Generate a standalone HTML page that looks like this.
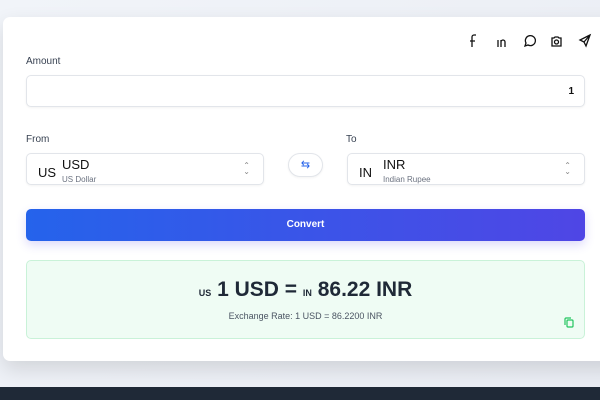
<!DOCTYPE html>
<html><head><style>
*{box-sizing:border-box;margin:0;padding:0}
body{width:600px;height:400px;overflow:hidden;background:linear-gradient(135deg,#f1f4f9,#e9ecf3);font-family:"Liberation Sans",sans-serif;position:relative}
.card{position:absolute;left:3px;top:17px;width:620px;height:344px;background:#fff;border-radius:7px;box-shadow:0 8px 20px rgba(0,0,0,.12)}
.foot{position:absolute;left:0;top:387px;width:600px;height:13px;background:#1f2937}
.lbl{position:absolute;font-size:10px;color:#374151}
.box{position:absolute;border:1px solid #e2e5ea;border-radius:5px;background:#fff;box-shadow:0 1px 2px rgba(0,0,0,.05)}
.icons{position:absolute;top:35px;font-size:11px;color:#111}
.sel .code{position:absolute;left:11px;top:11px;font-size:13px;color:#111}
.sel .cur{position:absolute;left:35px;top:3px;font-size:13px;color:#111}
.sel .nm{position:absolute;left:35px;top:21px;font-size:8px;color:#6b7280}
.sel .ar{position:absolute;right:13px;top:9px;font-size:8px;color:#888;line-height:6px}
</style></head><body>
<div class="card"></div>
<svg style="position:absolute;left:466px;top:33px" width="130" height="16" fill="none" stroke="#111" stroke-width="1.3">
<path d="M10 2h-2a2 2 0 0 0-2 2v10M4 8h5"/>
<path d="M32 4v0M32 7v7M35 14v-7M35 9a2 2 0 0 1 4 0v5"/>
<path d="M59 13l1-3a5 5 0 1 1 2 2z"/>
<path d="M86 5h2l1-1h3l1 1h2v8h-9z"/><circle cx="90.5" cy="9" r="2"/>
<path d="M124 2l-10 5 4 2 2 4z M118 9l6-7"/>
</svg>
<div class="lbl" style="left:26px;top:56px">Amount</div>
<div class="box" style="left:26px;top:75px;width:559px;height:32px"><span style="position:absolute;right:10px;top:10px;font-size:10px;font-weight:bold;color:#111">1</span></div>
<div class="lbl" style="left:26px;top:134px">From</div>
<div class="lbl" style="left:346px;top:134px">To</div>
<div class="box sel" style="left:26px;top:153px;width:238px;height:32px"><span class="code">US</span><span class="cur">USD</span><span class="nm">US Dollar</span><span class="ar">⌃<br>⌄</span></div>
<div class="box" style="left:288px;top:153px;width:35px;height:24px;border-radius:12px;text-align:center;color:#2563eb;font-size:11px;line-height:22px">⇆</div>
<div class="box sel" style="left:347px;top:153px;width:238px;height:32px"><span class="code">IN</span><span class="cur">INR</span><span class="nm">Indian Rupee</span><span class="ar">⌃<br>⌄</span></div>
<div style="position:absolute;left:26px;top:209px;width:559px;height:32px;border-radius:5px;background:linear-gradient(90deg,#2563eb,#4f46e5);color:#fff;font-size:10px;font-weight:bold;text-align:center;line-height:32px;box-shadow:0 4px 10px rgba(79,70,229,.2)">Convert</div>
<div style="position:absolute;left:26px;top:260px;width:559px;height:79px;border-radius:5px;background:#effcf4;border:1px solid #c9f2d8">
<div style="position:absolute;left:0;width:100%;top:17px;text-align:center;font-size:21px;font-weight:bold;color:#1f2937"><span style="font-size:9px">US</span> 1 USD = <span style="font-size:9px">IN</span> 86.22 INR</div>
<div style="position:absolute;left:0;width:100%;top:50px;text-align:center;font-size:9px;color:#4b5563">Exchange Rate: 1 USD = 86.2200 INR</div>
<svg style="position:absolute;left:536px;top:55px" width="12" height="12" fill="none" stroke="#22c55e" stroke-width="1.2"><rect x="4" y="4" width="6" height="7" rx="1"/><path d="M2 9V3a1 1 0 0 1 1-1h5"/></svg>
</div>
<div class="foot"></div>
</body></html>
